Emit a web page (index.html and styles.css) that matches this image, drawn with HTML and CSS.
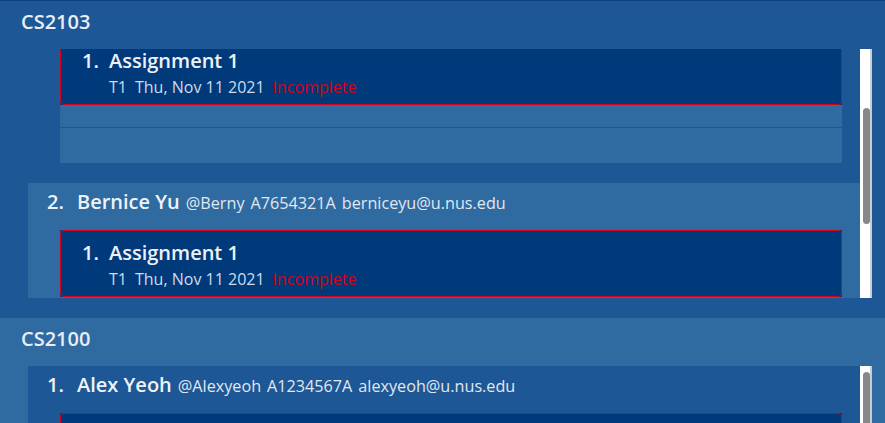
FILE: index.html
```html
<!DOCTYPE html>
<html>
<head>
<meta charset="utf-8">
<link rel="stylesheet" href="styles.css">
</head>
<body>
<div class="topline"></div>
<div class="modules">
  <section class="module odd">
    <div class="mod-title">CS2103</div>
    <div class="scroller">
      <div class="viewport">
        <div class="students scrolled">
          <div class="student odd">
            <div class="alist tall">
              <div class="acell"><div class="abox">
                <div class="atitle"><span class="anum">1.</span><span>Assignment 1</span></div>
                <div class="asub"><span>T1</span><span>Thu, Nov 11 2021</span><span class="inc">Incomplete</span></div>
              </div></div>
              <div class="empty"></div>
              <div class="empty last"></div>
            </div>
          </div>
          <div class="student even">
            <div class="srow"><span class="num">2.</span><span class="sname">Bernice Yu</span><span class="meta">@Berny</span><span class="meta">A7654321A</span><span class="meta">berniceyu@u.nus.edu</span></div>
            <div class="alist">
              <div class="acell"><div class="abox">
                <div class="atitle"><span class="anum">1.</span><span>Assignment 1</span></div>
                <div class="asub"><span>T1</span><span>Thu, Nov 11 2021</span><span class="inc">Incomplete</span></div>
              </div></div>
            </div>
          </div>
        </div>
      </div>
      <div class="sbar"><div class="thumb t1"></div></div>
    </div>
  </section>
  <section class="module even">
    <div class="mod-title">CS2100</div>
    <div class="scroller">
      <div class="viewport">
        <div class="students">
          <div class="student odd">
            <div class="srow"><span class="num">1.</span><span class="sname">Alex Yeoh</span><span class="meta">@Alexyeoh</span><span class="meta">A1234567A</span><span class="meta">alexyeoh@u.nus.edu</span></div>
            <div class="alist">
              <div class="acell"><div class="abox">
                <div class="atitle"><span class="anum">1.</span><span>Assignment 1</span></div>
                <div class="asub"><span>T1</span><span>Thu, Nov 11 2021</span><span class="inc">Incomplete</span></div>
              </div></div>
            </div>
          </div>
        </div>
      </div>
      <div class="sbar"><div class="thumb t2"></div></div>
    </div>
  </section>
</div>
</body>
</html>
```
FILE: styles.css
```css
* { box-sizing: border-box; }
html, body {
  margin: 0;
  padding: 0;
  height: 423px;
  overflow: hidden;
  background: #1d5795;
  font-family: "Open Sans", "Noto Sans", sans-serif;
  color: #eef2f7;
}
.topline { height: 1px; background: #0b3f80; }
.module { padding: 0 13px 20px 28px; }
.module.odd { background: #1d5795; }
.module.even { background: #2f6aa1; }
.mod-title {
  font-size: 20px;
  font-weight: 600;
  line-height: 27px;
  height: 48px;
  padding-top: 7px;
  margin-left: -7px;
  color: #e8eef5;
}
.scroller { display: flex; height: 249px; }
.viewport { flex: 1; overflow: hidden; }
.student { padding: 5px 18px 20px 19px; }
.student.odd { background: #1d5795; }
.student.even { background: #2f6aa1; }
.students.scrolled .student.odd { padding-top: 0; }
.students.scrolled .alist.tall { margin-top: -11px; }
.srow {
  display: flex;
  align-items: baseline;
  height: 42px;
  line-height: 27px;
  white-space: nowrap;
}
.num { font-size: 20px; font-weight: 600; width: 30px; }
.sname { font-size: 20px; font-weight: 600; margin-right: 6px; }
.meta { font-size: 16.2px; color: #e1e8f0; margin-right: 6px; }
.alist { margin-left: 13px; background: #2f6aa1; }
.alist.tall { height: 125px; }
.acell { background: #003a7a; height: 67px; }
.abox {
  height: 100%;
  border: 1px solid #d8001c;
  border-radius: 4px;
  padding: 8px 0 0 21px;
}
.atitle {
  display: flex;
  font-size: 20px;
  font-weight: 600;
  line-height: 27px;
}
.anum { width: 27px; }
.asub {
  display: flex;
  gap: 8px;
  margin-left: 27px;
  margin-top: 3px;
  font-size: 16px;
  line-height: 21px;
  color: #cfdbe8;
}
.inc { color: #d0021b; }
.empty { height: 23px; border-bottom: 1px solid #1d5795; }
.empty.last { height: 35px; border: 0; }
.sbar {
  width: 12px;
  background: #ffffff;
  border-right: 2px solid #c9ced4;
  position: relative;
}
.thumb {
  position: absolute;
  left: 3px;
  width: 7px;
  background: #888888;
  border-radius: 4px;
}
.thumb.t1 { top: 59px; height: 116px; }
.thumb.t2 { top: 6px; height: 120px; }
```
